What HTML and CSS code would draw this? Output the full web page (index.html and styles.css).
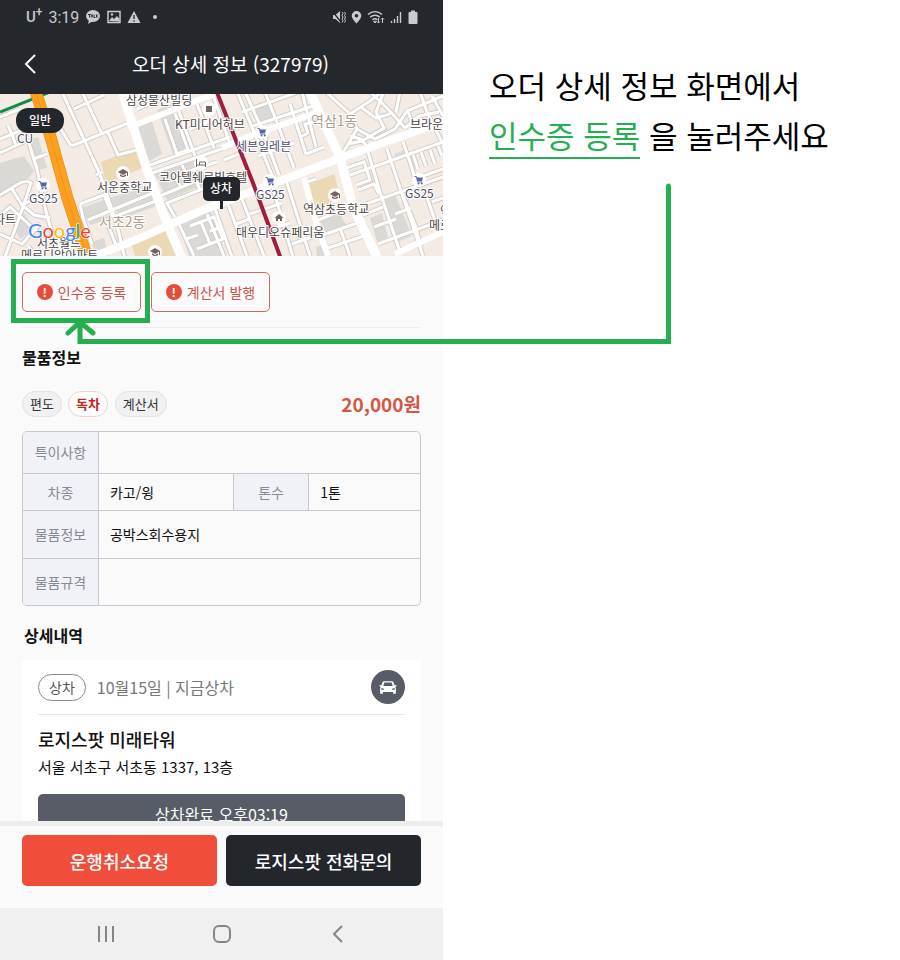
FILE: index.html
```html
<!DOCTYPE html>
<html lang="ko">
<head>
  <meta charset="UTF-8" />
  <meta name="viewport" content="width=device-width, initial-scale=1" />
  <title>오더 상세 정보</title>
  <link rel="stylesheet" href="styles.css">
</head>
<body>
  <main class="page">
    <section class="phone">
      <header class="top">
        <div class="status-bar">
          <div class="status-group">
            <span class="carrier">U<sup>+</sup></span>
            <span class="clock">3:19</span>
            <svg class="talk" width="16" height="16" viewBox="0 0 16 16">
              <ellipse cx="8" cy="7" rx="7" ry="6" fill="#c9cbcd"/>
              <path d="M4 11l-1 4 5-3z" fill="#c9cbcd"/>
              <path d="M3 5.500h3M4.500 5.500v3M6 8.500l1-3 1 3M9 5.500v3h1.500M11.500 5.500v3M13 5.500l-1.500 1.500 1.500 1.500" fill="none" stroke="#24272c" stroke-width=".9"/>
            </svg>
            <svg class="photo" width="14" height="14" viewBox="0 0 14 14">
              <rect x="1" y="1.500" width="12" height="11" fill="none" stroke="#c9cbcd" stroke-width="1.500"/>
              <path d="M2 11l3-4 2 2 3-3 2.500 3v2.500z" fill="#c9cbcd"/>
              <circle cx="5" cy="4.500" r="1.200" fill="#c9cbcd"/>
            </svg>
            <svg class="warn" width="14" height="14" viewBox="0 0 14 14">
              <path d="M7 1l6.500 12H.5z" fill="#c9cbcd"/>
              <path d="M7 5v4M7 10.300v1.500" stroke="#24272c" stroke-width="1.300"/>
            </svg>
            <span class="more-dot"></span>
          </div>
          <div class="status-group status-right">
            <svg width="14" height="14" viewBox="0 0 14 14">
              <path d="M1 5h2.500L8 1v12L3.500 9H1z" fill="#c9cbcd"/>
              <path d="M0 1l9 11" stroke="#24272c" stroke-width="1.300"/>
              <path d="M10 2l1 1.500-1 2 1 1.500-1 2 1 1.500-1 2M12.500 2l1 1.500-1 2 1 1.500-1 2 1 1.500-1 2" fill="none" stroke="#c9cbcd"/>
            </svg>
            <svg width="11" height="14" viewBox="0 0 11 14">
              <path d="M5.500 1a4.800 4.800 0 0 0-4.800 4.800C.7 9 5.500 13.500 5.500 13.500S10.300 9 10.300 5.800A4.800 4.800 0 0 0 5.500 1z" fill="#c9cbcd"/>
              <circle cx="5.500" cy="5.700" r="1.800" fill="#24272c"/>
            </svg>
            <svg width="18" height="14" viewBox="0 0 18 14">
              <path d="M1 4.500a10 10 0 0 1 14 0M3.200 7.200a7 7 0 0 1 9.600 0M5.400 9.700a4 4 0 0 1 5 0" fill="none" stroke="#c9cbcd" stroke-width="1.400"/>
              <path d="M6.500 11.300h3L8 13zM11.500 8v5M10 11.500l1.500 1.500 1.500-1.500M15.500 13V8M14 9.500L15.500 8 17 9.500" fill="none" stroke="#c9cbcd"/>
            </svg>
            <svg width="13" height="14" viewBox="0 0 13 14">
              <path d="M1.500 13v-2M4.500 13V9M7.500 13V6M10.500 13V2" stroke="#c9cbcd" stroke-width="1.400"/>
            </svg>
            <svg class="battery" width="10" height="14" viewBox="0 0 10 14">
              <path d="M3 .5h4V2h1.500q1 0 1 1v10q0 1-1 1h-7q-1 0-1-1V3q0-1 1-1H3z" fill="#c9cbcd"/>
            </svg>
          </div>
        </div>
        <div class="app-bar">
          <button class="icon-btn" type="button" aria-label="뒤로">
            <svg width="12" height="20" viewBox="0 0 12 20">
              <path d="M11 1L2 10l9 9" fill="none" stroke="#fff" stroke-width="2"/>
            </svg>
          </button>
          <h1>오더 상세 정보 (327979)</h1>
        </div>
      </header>

      <div class="content">
        <svg class="map" viewBox="0 0 443 162" preserveAspectRatio="xMidYMid slice">
          <defs>
            <g id="poi-cart">
              <circle r="7" fill="#fff"/>
              <path d="M-4.500-3.500h1.800l1.500 5.500h4.500" fill="none" stroke="#5562b5"/>
              <path d="M-2.500-2.500h6.500L3 1h-4.500z" fill="#5562b5"/>
              <circle cx="-.5" cy="3.500" r="1" fill="#5562b5"/>
              <circle cx="2.800" cy="3.500" r="1" fill="#5562b5"/>
            </g>
            <g id="poi-school">
              <circle r="7" fill="#fff"/>
              <path d="M-5-1L0-4l5 3-5 3zM-3 1.200V3Q0 5 3 3V1.200L0 3z" fill="#75625d"/>
              <path d="M4.500-1v4" stroke="#75625d"/>
            </g>
            <g id="streets" fill="none">
              <path d="M55 26l15 24q1 2 4 1l54-22M62-2l38 82 17 51 8 34M82-2l20 42M74 15l30-14M107 36l11 25 22-6M96 81l6-3M80 110l3 14 9 26M80 110l24-9 9 22M88 126l65-27M113 123l43-16M108 131l10 25"/>
              <path d="M0 23l20-8M0 45l34-14M0 59l24-11M8 31l8 20M28 46l8 26M33 65l14-5M36 70l8 40 14 52M0 101l20-12q7-3 11 0l-8 24-18 50M12 95l10 16 12 10M0 122l10-9 24 22M22 111l14-7M0 140l22 10 18-20M28 152l8 10M34 121l16 3"/>
              <path d="M137 15l24-10 13-7M165 25l12 35 11-4-13-37M150 71l80-28M152 79l78-27M178 15l17 47M197 10l17 44M214 4l16 46M190 35l20-8M160 102l36-15 4 9-33 13 8 14M180 92l-5-10 42-14M200 96l18-7M186 80l-4-9M176 124l18 38M190 132l24-9 9 22-26 10M201 128l9 22M207 120l17 42M186 145l12-4M215 115l17 48M228 110l19 52M210 137l12-4"/>
              <path d="M238 0l27 64 12 30M245-2l17 37 17 46M265-2l13 33 16 43M242 18l62-22M250 33l60-20M224 66l20-8M258 62l36-13M240 100l24 62M272 91l21 72M286 86l24 76M250 120l32-11M258 139l32-10M236 130l14-5"/>
              <path d="M290 10l16 50M302-2l14 55M295 18l24-8M300 43l8-4-3-9 14-4M306 60l18-7M316 85l-12 4"/>
              <path d="M326-2l24 22 7 15-14 24M350 20l20-13 12-9M357 35l18 10 20-10 12-18 36-15M370-2l17 16 18 20M383 0l-7 18 8 16-20 12-14-4M400-2l-4 20M362 14l14 10 14-4M348 50l14-3 8 8M407 15l6 16M420-2l7 20 16 32M432 2l11 20M405 34l14-12 20-4"/>
              <path d="M346 74l18-6 6 18-14 5M350 81l37-13 56-20M368 58l12 40 20 60M387 55l14 42 22 65M403 48l7 20 5 17 28-10M413 61l5 14M421 58l5 14M430 56l5 14M438 52l4 10M358 96l16-6 5 10M366 110l77-27M401 97l14 34M363 121l20-8M374 133l22-8M378 150l65-24M415 131l6 22M424 95l14 40M432 108l11-4M395 120l16-6"/>
              <path d="M316 127l38-16M323 141l40-14M328 154l42-14M292 150l20-7M340 134l10 28"/>
            </g>
          </defs>
          <rect width="443" height="162" fill="#f4ebe5"/>

          <!-- building blocks -->
          <g fill="#dbd9d6">
            <path d="M0 69l24-7 10 15-8 10-8 1-18 12z"/>
            <path d="M29 46l9-3 9 31-11 2z"/>
            <path d="M135 30l16-6 11 36-13 7z"/>
            <path d="M157 16l16-6 14 43-14 7z"/>
            <path d="M109 104l41-12 9 19-38 14z"/>
            <path d="M81 114l23-8 8 18-22 7z"/>
            <path d="M155 80l40-14 14 22-42 18z"/>
            <path d="M178 126l32-11 15 47h-36z"/>
            <path d="M255 13l15-6 7 18-16 7z"/>
            <path d="M320 127l20-7 7 13-20 8z"/>
            <path d="M370 124l12-5 6 24-11 5z"/>
            <path d="M383 105l12-5 17 42-15 6z"/>
            <path d="M394 60l11-4 3 6-11 4z"/>
            <path d="M92 148l12-4 5 18H96z"/>
            <path d="M10 125l14-6 10 16-14 10z"/>
            <path d="M316 153l9-3 4 12h-12z"/>
          </g>
          <g fill="#ead9b2">
            <path d="M101 68l35-13 9 18-39 16z"/>
            <path d="M131 148l35-14 12 28h-43z"/>
            <path d="M309 90l25-10 7 24-26 11z"/>
          </g>

          <!-- streets: outline, then surface -->
          <use href="#streets" class="street-line"/>
          <use href="#streets" class="street-fill"/>

          <!-- main roads -->
          <g fill="none" stroke="#fff">
            <path d="M122-4l5 17 20 63 20 53 15 36" stroke-width="9"/>
            <path d="M86 165q45-16 81-33l36-16q60-23 140-53l105-37" stroke-width="8"/>
            <path d="M309-4l31 67 13 50 25 52" stroke-width="9"/>
            <path d="M128 34l52-21 40-15M222 54l30-13 64-22" stroke-width="6"/>
            <path d="M304 84l12 44 12 34M395 160l50-23" stroke-width="6"/>
          </g>
          <path d="M0 18L50-2" stroke="#138a49" stroke-width="3" fill="none"/>
          <path d="M35-4l15 45 18 65 20 60" stroke="#e28c12" stroke-width="12" fill="none"/>
          <path d="M35-4l15 45 18 65 20 60" stroke="#fba01f" stroke-width="11" fill="none"/>
          <path d="M35-4l15 45 18 65 20 60" stroke="#ee9415" fill="none"/>
          <path d="M216-4l21 53 16 40 28 76" stroke="#9c1f3f" stroke-width="4" fill="none"/>

          <!-- places -->
          <use href="#poi-cart" x="43" y="91"/>
          <use href="#poi-cart" x="262" y="38"/>
          <use href="#poi-cart" x="270" y="87"/>
          <use href="#poi-cart" x="419" y="86"/>
          <use href="#poi-school" x="123" y="79"/>
          <use href="#poi-school" x="335" y="101"/>
          <use href="#poi-school" x="155" y="158"/>
          <circle cx="209" cy="15" r="7" fill="#fff"/>
          <path d="M206 12h6v6h-6z" fill="#75625d"/>
          <circle cx="201" cy="69" r="7" fill="#fff"/>
          <path d="M196.500 65v8M197 71h9M205.500 73v-5h-6v3" fill="none" stroke="#75625d"/>
          <circle cx="279" cy="124" r="7" fill="#fff"/>
          <path d="M274.500 124l4.500-4 4.500 4h-1.500v3h-2v-2h-2v2h-2v-3z" fill="#75625d"/>

          <g class="map-labels">
            <text x="126" y="11">삼성물산빌딩</text>
            <text x="175" y="35">KT미디어허브</text>
            <text x="410" y="35">브라운</text>
            <text x="236" y="57" class="shop">세븐일레븐</text>
            <text x="17" y="49" class="shop">CU</text>
            <text x="29" y="109" class="shop">GS25</text>
            <text x="256" y="105" class="shop">GS25</text>
            <text x="405" y="104" class="shop">GS25</text>
            <text x="97" y="98">서운중학교</text>
            <text x="159" y="88">코아텔쉐르빌호텔</text>
            <text x="303" y="120">역삼초등학교</text>
            <text x="236" y="143">대우디오슈페리움</text>
            <text x="-6" y="130">파트</text>
            <text x="440" y="122">역</text>
            <text x="429" y="136">메르</text>
            <text x="37" y="154">서초월드</text>
            <text x="21" y="166">메르디앙아파트</text>
            <text x="311" y="32" class="district">역삼1동</text>
            <text x="99" y="133" class="district">서초2동</text>
          </g>
          <text x="28" y="144" class="google"><tspan fill="#4285f4">G</tspan><tspan fill="#ea4335">o</tspan><tspan fill="#fbbc05">o</tspan><tspan fill="#4285f4">g</tspan><tspan fill="#34a853">l</tspan><tspan fill="#ea4335">e</tspan></text>

          <rect x="16" y="14" width="48" height="25" rx="12" fill="#23262b"/>
          <text x="40" y="31" class="pin">일반</text>
          <path d="M221.500 106v9" stroke="#23262b" stroke-width="3"/>
          <rect x="203" y="83" width="37" height="24" rx="5" fill="#23262b"/>
          <text x="221" y="99" class="pin">상차</text>
        </svg>

        <div class="details">
          <div class="actions">
            <div class="highlight">
              <button class="outline-btn" type="button"><span class="alert-icon">!</span>인수증 등록</button>
            </div>
            <button class="outline-btn" type="button"><span class="alert-icon">!</span>계산서 발행</button>
          </div>

          <h2>물품정보</h2>
          <div class="summary">
            <span class="tag">편도</span>
            <span class="tag tag-red">독차</span>
            <span class="tag tag-last">계산서</span>
            <strong class="price">20,000원</strong>
          </div>

          <div class="table-box">
            <table>
              <colgroup>
                <col class="col-label"><col class="col-car"><col class="col-label"><col>
              </colgroup>
              <tr class="row-note"><th scope="row">특이사항</th><td colspan="3"></td></tr>
              <tr class="row-car"><th scope="row">차종</th><td class="car">카고/윙</td><th scope="row">톤수</th><td>1톤</td></tr>
              <tr><th scope="row">물품정보</th><td colspan="3">공박스회수용지</td></tr>
              <tr><th scope="row">물품규격</th><td colspan="3"></td></tr>
            </table>
          </div>

          <h2 class="history-title">상세내역</h2>
          <article class="card">
            <div class="card-head">
              <span class="pill">상차</span>
              <span class="date">10월15일 | 지금상차</span>
              <button class="car-btn" type="button" aria-label="차량">
                <svg width="18" height="15" viewBox="0 0 20 16">
                  <path d="M5.500 1h9q1 0 1.500 1l1.300 3.500H19q.8 0 .5.800l-.8.900-.7.300q.8.700.8 2V14q0 1-1 1h-1.300q-1 0-1-1v-1h-11v1q0 1-1 1H2.200q-1 0-1-1V9.500q0-1.300.8-2l-.7-.3-.8-.9q-.3-.8.500-.8h1.700L4 2q.5-1 1.500-1z" fill="#fff"/>
                  <path d="M6 2.500h8l1.200 3.700H4.800zM2.500 8.500l3 .8v1.200h-3zM17.500 8.500l-3 .8v1.200h3z" fill="#575c66"/>
                </svg>
              </button>
            </div>
            <h3>로지스팟 미래타워</h3>
            <p class="address">서울 서초구 서초동 1337, 13층</p>
            <button class="done-btn" type="button">상차완료 오후03:19</button>
          </article>
        </div>
      </div>

      <footer class="footer">
        <button class="footer-btn cancel" type="button">운행취소요청</button>
        <button class="footer-btn" type="button">로지스팟 전화문의</button>
      </footer>

      <nav class="sys-nav">
        <button class="icon-btn" type="button" aria-label="최근 앱">
          <svg width="18" height="18" viewBox="0 0 18 18">
            <path d="M2 1v16M9 1v16M16 1v16" stroke="#858585" stroke-width="2"/>
          </svg>
        </button>
        <button class="icon-btn" type="button" aria-label="홈">
          <svg width="18" height="18" viewBox="0 0 18 18">
            <rect x="1" y="1" width="16" height="16" rx="5" fill="none" stroke="#858585" stroke-width="2"/>
          </svg>
        </button>
        <button class="icon-btn" type="button" aria-label="이전">
          <svg width="18" height="18" viewBox="0 0 18 18">
            <path d="M13 1L5 9l8 8" fill="none" stroke="#858585" stroke-width="2"/>
          </svg>
        </button>
      </nav>
    </section>

    <section class="guide">
      <p>오더 상세 정보 화면에서<br><span class="target">인수증 등록</span> 을 눌러주세요</p>
    </section>

    <!-- arrow from the guide text to the button -->
    <svg class="arrow" width="610" height="166" viewBox="0 0 610 166">
      <path d="M606.500 5v155.500H18v-18M6 152l12-11 13 11" fill="none" stroke="#26af50" stroke-width="5" stroke-linecap="round"/>
    </svg>
  </main>
</body>
</html>
```
FILE: styles.css
```css
* {
  box-sizing: border-box;
}

body {
  margin: 0;
  background: #fff;
  color: #111;
  font-family: "Noto Sans CJK KR", sans-serif;
}

h1, h2, h3, p {
  margin: 0;
}

button {
  font-family: inherit;
  padding: 0;
  border: none;
  cursor: pointer;
}

.page {
  position: relative;
  display: grid;
  grid-template-columns: minmax(0, 443fr) minmax(0, 457fr);
  height: 100vh;
}

.phone {
  display: flex;
  flex-direction: column;
  height: 100vh;
  background: #fafafa;
}

/* top bars */
.top {
  background: #24272c;
  color: #fff;
}

.status-bar {
  display: flex;
  justify-content: space-between;
  align-items: center;
  height: 34px;
  padding: 0 25px 0 26px;
  color: #c9cbcd;
  font-family: Roboto, sans-serif;
  font-size: 16px;
}

.status-group {
  display: flex;
  align-items: center;
  gap: 6px;
}

.status-right {
  gap: 5px;
}

.carrier {
  font-size: 15px;
  font-weight: 500;
  line-height: 16px;
}

.carrier sup {
  font-size: 12px;
  line-height: 0;
}

.more-dot {
  width: 4px;
  height: 4px;
  margin-left: 6px;
  border-radius: 50%;
  background: #c9cbcd;
}

.app-bar {
  display: flex;
  align-items: center;
  height: 60px;
  padding: 0 24px;
}

.app-bar h1 {
  flex: 1;
  padding-left: 6px;
  font-size: 19px;
  font-weight: 400;
  line-height: 28px;
  text-align: center;
}

.icon-btn {
  display: flex;
  background: none;
}

.content {
  flex: 1;
  min-height: 0;
  overflow: hidden;
}

/* map */
.map {
  display: block;
  width: 100%;
  height: 162px;
}

.street-line {
  stroke: #d0ccc8;
  stroke-width: 5px;
}

.street-fill {
  stroke: #fff;
  stroke-width: 3px;
}

.map-labels {
  font-size: 12px;
  fill: #4a4644;
  stroke: #fff;
  stroke-width: 2px;
  paint-order: stroke;
}

.map-labels .shop {
  fill: #4b4d66;
}

.map-labels .district {
  font-size: 14px;
  fill: #ada08f;
}

.google {
  font-family: Lato, sans-serif;
  font-size: 20px;
  stroke: #fff;
  stroke-width: 1px;
  paint-order: stroke;
}

.pin {
  font-size: 12px;
  font-weight: 500;
  fill: #fff;
  text-anchor: middle;
}

/* order details */
.details {
  padding: 16px 22px 0;
}

.actions {
  display: flex;
  gap: 10px;
  padding-bottom: 15px;
  border-bottom: 1px solid #eee;
}

.highlight {
  position: relative;
}

.highlight::after {
  content: "";
  position: absolute;
  inset: -13px -9px -11px -11px;
  border: 5px solid #26af50;
  pointer-events: none;
}

.outline-btn {
  display: flex;
  align-items: center;
  justify-content: center;
  gap: 5px;
  width: 119px;
  height: 40px;
  border: 1px solid #cf6a62;
  border-radius: 5px;
  background: #fafafa;
  color: #c9554b;
  font-size: 14px;
}

.alert-icon {
  width: 16px;
  height: 16px;
  border-radius: 50%;
  background: #e94b3a;
  color: #fff;
  font-size: 12px;
  font-weight: 700;
  line-height: 16px;
}

h2 {
  margin-top: 17px;
  font-size: 16px;
  font-weight: 700;
  line-height: 24px;
}

.summary {
  display: flex;
  align-items: center;
  gap: 6px;
  margin: 22px 0 14px;
}

.tag {
  height: 26px;
  padding: 0 7px;
  border: 1px solid #e2e2e2;
  border-radius: 13px;
  background: #f1f1f1;
  color: #333;
  font-size: 13px;
  line-height: 24px;
}

.tag-red {
  border-color: #f8cfcb;
  background: #fff;
  color: #c3241b;
  font-weight: 700;
}

.tag-last {
  margin-left: 1px;
}

.price {
  margin-left: auto;
  color: #cf5847;
  font-size: 19px;
  line-height: 26px;
}

.table-box {
  border: 1px solid #c6c8cd;
  border-radius: 5px;
  overflow: hidden;
}

table {
  width: 100%;
  border-collapse: collapse;
  table-layout: fixed;
  font-size: 14px;
  line-height: 20px;
}

.col-label {
  width: 19%;
}

.col-car {
  width: 34%;
}

th, td {
  height: 48px;
  padding: 0 11px;
  border-bottom: 1px solid #c6c8cd;
  text-align: left;
}

tr:last-child th, tr:last-child td {
  height: 47px;
  border-bottom: none;
}

th {
  padding: 0;
  border-right: 1px solid #c6c8cd;
  background: #f0f2f7;
  color: #868a91;
  font-weight: 400;
  text-align: center;
}

.row-note th, .row-note td {
  height: 41px;
}

.row-car th, .row-car td {
  height: 37px;
}

.car {
  border-right: 1px solid #c6c8cd;
}

.history-title {
  padding-left: 2px;
}

.card {
  margin-top: 13px;
  padding: 10px 16px 16px;
  background: #fff;
}

.card-head {
  display: flex;
  align-items: center;
  gap: 11px;
  padding-bottom: 10px;
  border-bottom: 1px solid #e8e8e8;
}

.pill {
  height: 27px;
  padding: 0 10px;
  border: 1px solid #888;
  border-radius: 14px;
  color: #555;
  font-size: 14px;
  line-height: 25px;
}

.date {
  color: #777;
  font-size: 16px;
  line-height: 24px;
}

.car-btn {
  display: flex;
  align-items: center;
  justify-content: center;
  width: 34px;
  height: 34px;
  margin-left: auto;
  border-radius: 50%;
  background: #575c66;
}

h3 {
  margin-top: 10px;
  font-size: 18px;
  font-weight: 500;
  line-height: 28px;
}

.address {
  font-size: 15px;
  line-height: 28px;
}

.done-btn {
  width: 100%;
  height: 40px;
  margin-top: 13px;
  border-radius: 5px;
  background: #575c66;
  color: #fff;
  font-size: 16px;
}

/* bottom bars */
.footer {
  display: flex;
  gap: 9px;
  padding: 9px 22px 22px;
  border-top: 5px solid #ededed;
}

.footer-btn {
  flex: 1;
  height: 51px;
  border-radius: 5px;
  background: #23262b;
  color: #fff;
  font-size: 18px;
  font-weight: 500;
}

.cancel {
  background: #f04e3a;
}

.sys-nav {
  display: flex;
  justify-content: center;
  align-items: center;
  gap: 98px;
  height: 52px;
  background: #f0f0f0;
}

/* guide text */
.guide {
  padding: 60px 0 0 46px;
  color: #000;
  font-size: 31px;
  line-height: 50px;
}

.target {
  border-bottom: 2px solid #26af50;
  color: #26af50;
}

.arrow {
  position: absolute;
  top: 181px;
  left: 62px;
}
```
